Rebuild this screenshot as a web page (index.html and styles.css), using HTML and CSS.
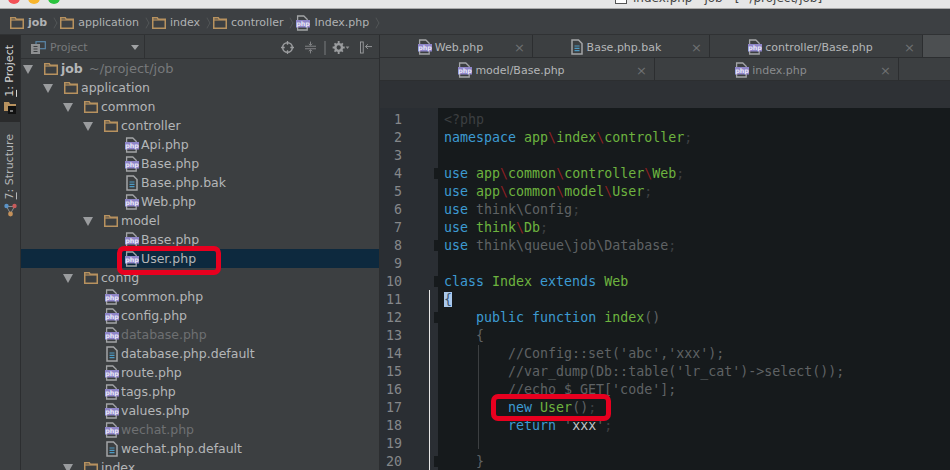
FILE: index.html
```html
<!DOCTYPE html>
<html>
<head>
    <title>index.php - job</title>
    <link rel="stylesheet" href="styles.css">
</head>
<body>
    <svg class="defs" width="0" height="0">
        <symbol id="folder" viewBox="0 0 14 12">
            <path d="M.75 11.25V.75h4.5l1 1.5h7v9z" fill="none" stroke="#b8925f" stroke-width="1.5"/>
            <path d="M1 3h12" stroke="#b8925f" stroke-width="1.2"/>
        </symbol>
        <symbol id="php" viewBox="0 0 14 16">
            <path d="M1.6 5V1h6.2l3.4 3.2V5M1.6 12v3h9.6v-3" fill="none" stroke="#a3a5a7" stroke-width="1.3"/>
            <rect x="0" y="5" width="14" height="7.5" fill="#8f86c9"/>
            <text x="7" y="11" text-anchor="middle" font-family="DejaVu Sans" font-weight="bold" font-size="6.4" fill="#e8e6f6">php</text>
        </symbol>
        <symbol id="txt" viewBox="0 0 12 16">
            <path d="M1 15V1h6.5L11 4.5V15z" fill="none" stroke="#a3a5a7" stroke-width="1.5"/>
            <path d="M3.5 7h5M3.5 9.3h5M3.5 11.6h5" stroke="#4d9ac4" stroke-width="1.2"/>
        </symbol>
    </svg>

    <div class="titlebar">
        <span class="light red"></span>
        <span class="light yellow"></span>
        <span class="light green"></span>
        <div class="title">
            <span class="title-icon"></span>
            <span>index.php - job - [~/project/job]</span>
        </div>
    </div>

    <div class="crumbs">
        <svg class="ic-folder"><use href="#folder"/></svg><span class="crumb strong">job</span><span class="chev"></span>
        <svg class="ic-folder"><use href="#folder"/></svg><span class="crumb">application</span><span class="chev"></span>
        <svg class="ic-folder"><use href="#folder"/></svg><span class="crumb">index</span><span class="chev"></span>
        <svg class="ic-folder"><use href="#folder"/></svg><span class="crumb">controller</span><span class="chev"></span>
        <svg class="ic-file"><use href="#php"/></svg><span class="crumb">Index.php</span><span class="chev"></span>
    </div>

    <div class="main">
        <div class="strip">
            <div class="strip-tab active">
                <span class="vtext"><u>1</u>: Project</span>
                <svg class="strip-folder" width="12" height="13" viewBox="0 0 12 13">
                    <path d="M0 10V1h5l1 2h6v3H6v4z" fill="#b8925f"/>
                    <rect x="4" y="5" width="8" height="8" fill="#111"/>
                    <path d="M6 10h3" stroke="#ddd" stroke-width="1"/>
                </svg>
            </div>
            <div class="strip-tab">
                <span class="vtext"><u>7</u>: Structure</span>
                <svg class="strip-struct" width="13" height="14" viewBox="0 0 13 14">
                    <path d="M2.5 3.5l4 7 4-7-8 0" fill="none" stroke="#8a8c8e" stroke-width="1"/>
                    <circle cx="2.5" cy="3" r="2.2" fill="#5b93c7"/>
                    <circle cx="10.5" cy="3" r="2.2" fill="#c75b5b"/>
                    <circle cx="6.5" cy="11" r="2.4" fill="#c4915a"/>
                </svg>
            </div>
        </div>

        <div class="project">
            <div class="project-head">
                <div class="project-picker">
                    <svg class="picker-icon" width="15" height="13" viewBox="0 0 15 13">
                        <rect x="5" y=".7" width="9.3" height="7" fill="none" stroke="#5b87a8" stroke-width="1.2"/>
                        <rect x="0" y="3" width="9" height="10" fill="#8e9092"/>
                        <path d="M2.5 5.5h4M2.5 8h4M2.5 10.5h4" stroke="#3c3f41" stroke-width="1"/>
                    </svg>
                    <span class="picker-name">Project</span>
                    <span class="picker-arrow"></span>
                </div>
                <div class="head-tools">
                    <svg class="tool-locate" width="13" height="13" viewBox="0 0 14 14">
                        <circle cx="7" cy="7" r="5.2" fill="none" stroke="#9a9c9e" stroke-width="1.6"/>
                        <path d="M7 0v4M7 10v4M0 7h4M10 7h4" stroke="#9a9c9e" stroke-width="1.4"/>
                    </svg>
                    <svg class="tool-collapse" width="11" height="13" viewBox="0 0 13 14">
                        <path d="M0 5.5h13M0 8.5h13M6.5 0v4M4.5 2.5l2 2 2-2M6.5 14v-4M4.5 11.5l2-2 2 2" fill="none" stroke="#8e9092" stroke-width="1"/>
                    </svg>
                    <span class="tool-sep"></span>
                    <svg class="tool-gear" width="18" height="13" viewBox="0 0 18 14">
                        <circle cx="6.5" cy="7" r="3.6" fill="none" stroke="#9a9c9e" stroke-width="2.6"/>
                        <path d="M6.5 0v3M6.5 11v3M0 7h3M10 7h3M2 2.5l2 2M9 9.5l2 2M2 11.5l2-2M9 4.5l2-2" stroke="#9a9c9e" stroke-width="2"/>
                        <path d="M14 6h4l-2 2.5z" fill="#8e9092"/>
                    </svg>
                    <svg class="tool-hide" width="12" height="13" viewBox="0 0 13 13">
                        <rect x=".5" y=".5" width="3" height="12" fill="none" stroke="#9a9c9e"/>
                        <path d="M6 5.5h7M8.5 3l-2.5 2.5L8.5 8" fill="none" stroke="#9a9c9e" stroke-width="1"/>
                    </svg>
                </div>
            </div>

            <div class="tree">
                <div class="row l0 open"><svg class="ic-folder"><use href="#folder"/></svg><span class="name strong">job</span><span class="path">~/project/job</span></div>
                <div class="row l1 open"><svg class="ic-folder"><use href="#folder"/></svg><span class="name">application</span></div>
                <div class="row l2 open"><svg class="ic-folder"><use href="#folder"/></svg><span class="name">common</span></div>
                <div class="row l3 open"><svg class="ic-folder"><use href="#folder"/></svg><span class="name">controller</span></div>
                <div class="row l4"><svg class="ic-file"><use href="#php"/></svg><span class="name">Api.php</span></div>
                <div class="row l4"><svg class="ic-file"><use href="#php"/></svg><span class="name">Base.php</span></div>
                <div class="row l4"><svg class="ic-file"><use href="#txt"/></svg><span class="name">Base.php.bak</span></div>
                <div class="row l4"><svg class="ic-file"><use href="#php"/></svg><span class="name">Web.php</span></div>
                <div class="row l3 open"><svg class="ic-folder"><use href="#folder"/></svg><span class="name">model</span></div>
                <div class="row l4"><svg class="ic-file"><use href="#php"/></svg><span class="name">Base.php</span></div>
                <div class="row l4 selected"><svg class="ic-file"><use href="#php"/></svg><span class="name">User.php</span></div>
                <div class="row l2 open"><svg class="ic-folder"><use href="#folder"/></svg><span class="name">config</span></div>
                <div class="row l3"><svg class="ic-file"><use href="#php"/></svg><span class="name">common.php</span></div>
                <div class="row l3"><svg class="ic-file"><use href="#php"/></svg><span class="name">config.php</span></div>
                <div class="row l3"><svg class="ic-file"><use href="#php"/></svg><span class="name ignored">database.php</span></div>
                <div class="row l3"><svg class="ic-file"><use href="#txt"/></svg><span class="name">database.php.default</span></div>
                <div class="row l3"><svg class="ic-file"><use href="#php"/></svg><span class="name">route.php</span></div>
                <div class="row l3"><svg class="ic-file"><use href="#php"/></svg><span class="name">tags.php</span></div>
                <div class="row l3"><svg class="ic-file"><use href="#php"/></svg><span class="name">values.php</span></div>
                <div class="row l3"><svg class="ic-file"><use href="#php"/></svg><span class="name ignored">wechat.php</span></div>
                <div class="row l3"><svg class="ic-file"><use href="#txt"/></svg><span class="name">wechat.php.default</span></div>
                <div class="row l2 open"><svg class="ic-folder"><use href="#folder"/></svg><span class="name">index</span></div>
            </div>
            <div class="mark mark-tree"></div>
        </div>

        <div class="editor">
            <div class="tabs">
                <div class="tab t-web"><svg class="ic-file"><use href="#php"/></svg><span>Web.php</span><i>×</i></div>
                <div class="tab t-bak"><svg class="ic-file"><use href="#txt"/></svg><span>Base.php.bak</span><i>×</i></div>
                <div class="tab t-ctl"><svg class="ic-file"><use href="#php"/></svg><span>controller/Base.php</span><i>×</i></div>
                <div class="tab-rest"></div>
            </div>
            <div class="tabs">
                <div class="tab t-mod"><svg class="ic-file"><use href="#php"/></svg><span>model/Base.php</span><i>×</i></div>
                <div class="tab t-idx"><svg class="ic-file"><use href="#php"/></svg><span class="current">index.php</span><i>×</i></div>
                <div class="tab-fill"></div>
            </div>
            <div class="crumb-gap"></div>
            <div class="code-wrap">
                <div class="gutter">
                    <div>1</div><div>2</div><div>3</div><div class="fold">4</div><div>5</div>
                    <div>6</div><div>7</div><div class="fold">8</div><div>9</div><div class="fold">10</div>
                    <div>11</div><div class="fold">12</div><div>13</div><div>14</div><div>15</div>
                    <div>16</div><div>17</div><div>18</div><div>19</div><div class="fold">20</div>
                </div>
<pre class="code"><span class="faint">&lt;?php</span>
<span class="kw">namespace</span> <span class="ns">app</span><span class="bs">\</span><span class="ns">index</span><span class="bs">\</span><span class="ns">controller</span><span class="faint">;</span>

<span class="kw">use</span> <span class="ns">app</span><span class="bs">\</span><span class="ns">common</span><span class="bs">\</span><span class="ns">controller</span><span class="bs">\</span><span class="ns">Web</span><span class="faint">;</span>
<span class="kw">use</span> <span class="ns">app</span><span class="bs">\</span><span class="ns">common</span><span class="bs">\</span><span class="ns">model</span><span class="bs">\</span><span class="ns">User</span><span class="faint">;</span>
<span class="kw">use</span> <span class="dim">think\Config</span><span class="faint">;</span>
<span class="kw">use</span> <span class="ns">think</span><span class="bs">\</span><span class="ns">Db</span><span class="faint">;</span>
<span class="kw">use</span> <span class="dim">think\queue\job\Database</span><span class="faint">;</span>

<span class="kw">class</span> <span class="ns">Index</span> <span class="kw">extends</span> <span class="ns">Web</span>
<span class="brace">{</span>
    <span class="kw">public</span> <span class="kw">function</span> <span class="ns">index</span><span class="dim">()</span>
    <span class="dim">{</span>
        <span class="dim">//Config::set('abc','xxx');</span>
        <span class="dim">//var_dump(Db::table('lr_cat')-&gt;select());</span>
        <span class="dim">//echo $_GET['code'];</span>
        <span class="kw">new</span> <span class="ns">User</span><span class="dim">()</span><span class="faint">;</span>
        <span class="kw">return</span> <span class="dim">'</span><span class="str">xxx</span><span class="dim">'</span><span class="faint">;</span>

    <span class="dim">}</span></pre>
                <div class="caret-line"></div>
                <div class="indent-line"></div>
                <div class="mark mark-code"></div>
            </div>
        </div>
    </div>
</body>
</html>
```

FILE: styles.css
```css
/* general */
html, body {
    margin: 0;
    height: 100%;
    overflow: hidden;
}
body {
    display: flex;
    flex-direction: column;
    font-family: "DejaVu Sans", sans-serif;
    font-size: 12.5px;
    background-color: #3c3f41;
    color: #b4b6b8;
}
.defs {
    position: absolute;
}
.ic-folder {
    width: 14px;
    height: 12px;
    flex: none;
}
.ic-file {
    width: 14px;
    height: 16px;
    flex: none;
}
.strong {
    font-weight: bold;
}

/* window title */
.titlebar {
    height: 8px;
    flex: none;
    display: flex;
    align-items: flex-end;
    gap: 8px;
    padding: 0 0 0 8px;
    background-color: #e6e6e6;
    border-bottom: 1px solid #a9a9a9;
    overflow: hidden;
}
.light {
    width: 12px;
    height: 12px;
    flex: none;
    border-radius: 50%;
    margin-bottom: 4px;
}
.red { background-color: #f25056; }
.yellow { background-color: #f8b52d; }
.green { background-color: #2ac33e; }
.title {
    margin-left: 547px;
    display: flex;
    align-items: flex-end;
    gap: 6px;
    flex: none;
    font-size: 12px;
    line-height: 16px;
    margin-bottom: 2px;
    color: #444;
    white-space: pre;
}
.title-icon {
    width: 10px;
    height: 12px;
    border: 1px solid #555;
    background-color: #fff;
    margin-bottom: 2px;
}

/* breadcrumb */
.crumbs {
    height: 23px;
    flex: none;
    display: flex;
    align-items: center;
    padding: 2px 0 0 10px;
    font-size: 11px;
    background-color: #3d4043;
    border-bottom: 1px solid #303234;
}
.crumb {
    margin-left: 4px;
    color: #b0b2b4;
}
.chev {
    width: 7px;
    height: 7px;
    margin: 0 2px 0 3px;
    border-top: 1px solid #55585a;
    border-right: 1px solid #55585a;
    transform: scaleX(.6) rotate(45deg);
    flex: none;
}

.main {
    flex: 1;
    display: flex;
    min-height: 0;
}

/* left tool strip */
.strip {
    width: 20px;
    flex: none;
    background-color: #3c3f41;
    border-right: 1px solid #2c2e30;
}
.strip-tab {
    display: flex;
    flex-direction: column;
    align-items: center;
    gap: 4px;
    padding-top: 10px;
    height: 77px;
    font-size: 11px;
}
.strip-tab.active {
    background-color: #2a2b2c;
    color: #d4d4d4;
    margin-bottom: 2px;
}
.vtext {
    writing-mode: vertical-rl;
    transform: rotate(180deg);
    white-space: nowrap;
    line-height: 14px;
}
.strip-folder, .strip-struct {
    flex: none;
}

/* project panel */
.project {
    width: 358px;
    flex: none;
    position: relative;
    overflow: hidden;
    border-right: 1px solid #2c2e30;
}
.project-head {
    height: 23px;
    display: flex;
    align-items: center;
    justify-content: space-between;
    border-bottom: 1px solid #2f3133;
}
.project-picker {
    width: 124px;
    height: 23px;
    display: flex;
    align-items: center;
    padding: 2px 5px 0 10px;
    box-sizing: border-box;
    border-right: 1px solid #2f3133;
}
.picker-name {
    margin-left: 4px;
    font-size: 11px;
    color: #77797b;
}
.picker-arrow {
    width: 0;
    height: 0;
    margin-left: auto;
    border-left: 4px solid transparent;
    border-right: 4px solid transparent;
    border-top: 5px solid #a0a2a4;
}
.head-tools {
    display: flex;
    align-items: center;
    padding: 2px 7px 0 0;
}
.tool-collapse { margin-left: 11px; }
.tool-sep {
    width: 2px;
    height: 14px;
    margin-left: 8px;
    background-color: #5a5d5f;
}
.tool-gear { margin-left: 6px; }
.tool-hide { margin-left: 10px; }

.row {
    height: 19px;
    display: flex;
    align-items: center;
    position: relative;
    white-space: nowrap;
    color: #b4b6b8;
}
.row .name {
    margin-left: 3px;
}
.row .ic-file + .name {
    margin-left: 2px;
}
.row .path {
    margin-left: 6px;
    font-size: 13px;
    color: #77797b;
}
.row .ignored {
    color: #6e7072;
}
.row.selected {
    background-color: #0d293e;
}
.l0 { padding-left: 23px; }
.l1 { padding-left: 43px; }
.l2 { padding-left: 63px; }
.l3 { padding-left: 83px; }
.l3 .ic-file { margin-left: 1px; }
.l4 { padding-left: 104px; }
.open::before {
    content: "";
    position: absolute;
    top: 6px;
    width: 0;
    height: 0;
    border-left: 5px solid transparent;
    border-right: 5px solid transparent;
    border-top: 9px solid #9a9c9e;
}
.l0.open::before { left: 2px; }
.l1.open::before { left: 22px; }
.l2.open::before { left: 42px; }
.l3.open::before { left: 62px; }

/* red marks drawn over the screenshot */
.mark {
    position: absolute;
    box-sizing: border-box;
    border: 5px solid #e8001f;
    border-radius: 7px;
}
.mark-tree {
    left: 96px;
    top: 211px;
    width: 104px;
    height: 29px;
}
.mark-code {
    left: 111px;
    top: 286px;
    width: 120px;
    height: 27px;
}

/* editor */
.editor {
    flex: 1;
    min-width: 0;
    display: flex;
    flex-direction: column;
}
.tabs {
    height: 22px;
    flex: none;
    display: flex;
    border-bottom: 1px solid #2c2e30;
    background-color: #3c3f41;
}
.tab {
    display: flex;
    align-items: center;
    justify-content: center;
    gap: 3px;
    position: relative;
    box-sizing: border-box;
    padding: 2px 11px 0 0;
    border-right: 1px solid #2c2e30;
    font-size: 11px;
    color: #b4b6b8;
}
.tab i {
    position: absolute;
    right: 7px;
    font-style: normal;
    color: #6e7072;
    font-size: 13px;
}
.tab .current {
    color: #8a8c8e;
}
.t-web { width: 153px; }
.t-bak { width: 177px; }
.t-ctl { width: 213px; }
.t-mod { width: 275px; }
.t-idx { width: 244px; }
.tab-rest {
    flex: 1;
    background-color: #4c4f51;
}
.tab-fill {
    flex: 1;
}
.crumb-gap {
    height: 27px;
    flex: none;
    background-color: #2e3135;
}
.code-wrap {
    flex: 1;
    display: flex;
    position: relative;
    overflow: hidden;
    background-color: #161a1c;
    font-family: "DejaVu Sans Mono", monospace;
    font-size: 13.3px;
    line-height: 18px;
}
.gutter {
    width: 58px;
    flex: none;
    box-sizing: border-box;
    padding: 3px 36px 0 0;
    text-align: right;
    background-color: #2a2e33;
    color: #85878a;
}
.gutter .fold {
    position: relative;
}
.gutter .fold::after {
    content: "";
    position: absolute;
    right: -36px;
    top: 3px;
    width: 4px;
    height: 11px;
    background-color: #161a1c;
}
.code {
    margin: 0;
    padding: 3px 0 0 6px;
    font: inherit;
    color: #8a8c8e;
}
.kw { color: #3d9bd2; }
.ns { color: #6db33f; }
.bs { color: #8a1f22; }
.dim { color: #5f6264; }
.faint { color: #3c3f41; }
.str { color: #c4c6c8; }
.brace {
    background-color: #a9c8ec;
    color: #3c5570;
}
.caret-line {
    position: absolute;
    left: 49px;
    top: 182px;
    bottom: 0;
    width: 1px;
    background-color: #e8e8e8;
}
.indent-line {
    position: absolute;
    left: 98px;
    top: 237px;
    height: 104px;
    width: 1px;
    background-color: #3c3f41;
}
```
